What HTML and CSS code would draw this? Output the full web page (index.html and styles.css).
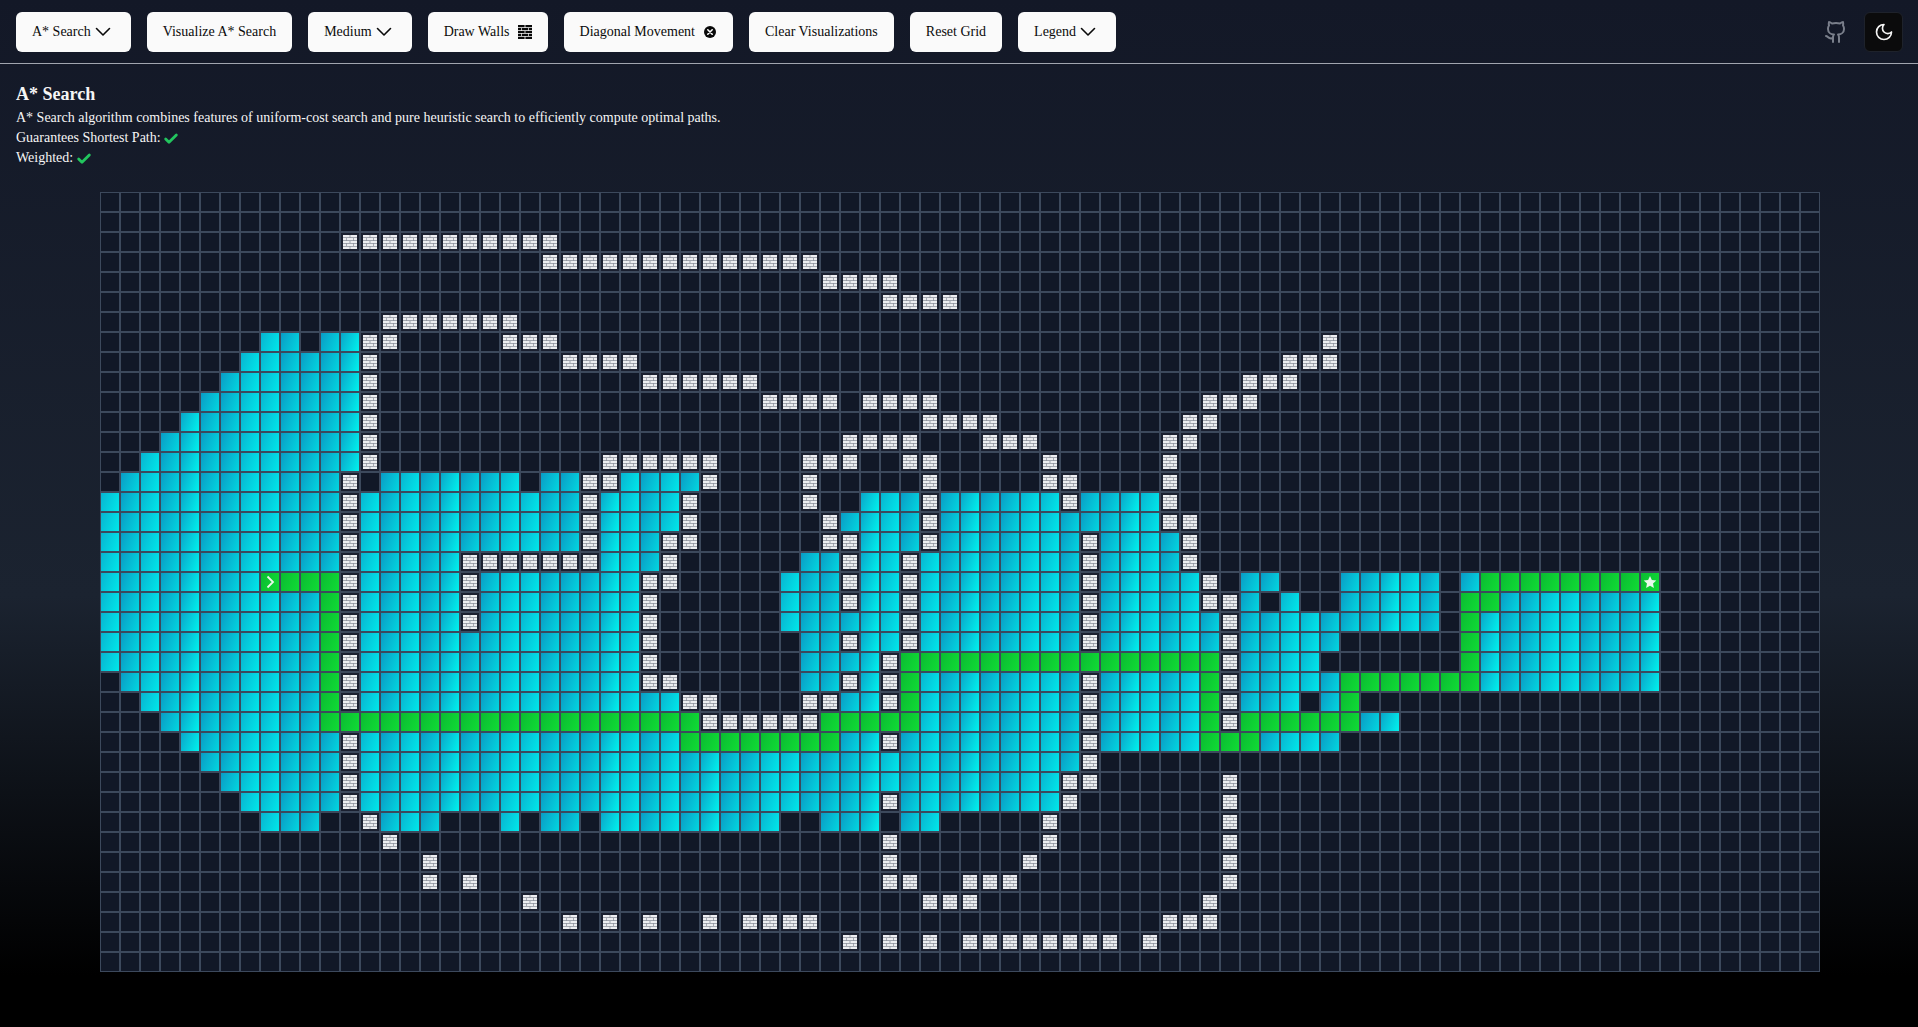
FILE: index.html
```html
<!DOCTYPE html>
<html lang="en">
<head>
  <meta charset="UTF-8">
  <title>Pathfinding Visualizer</title>
  <link rel="stylesheet" href="styles.css">
</head>
<body>
  <svg class="sprite" xmlns="http://www.w3.org/2000/svg">
    <symbol id="brick" viewBox="0 0 14 14">
      <path fill="currentColor" d="M0 0h6.6v2.24H0zM7.4 0H14v2.24H7.4zM0 2.94h3.1v2.24H0zM3.8 2.94h6.4v2.24H3.8zM10.9 2.94H14v2.24h-3.1zM0 5.88h6.6v2.24H0zM7.4 5.88H14v2.24H7.4zM0 8.82h3.1v2.24H0zM3.8 8.82h6.4v2.24H3.8zM10.9 8.82H14v2.24h-3.1zM0 11.76h6.6V14H0zM7.4 11.76H14V14H7.4z"/>
    </symbol>
    <symbol id="chevron" viewBox="0 0 24 24">
      <path d="m5.5 8.5 6.5 6.5 6.5-6.5" fill="none" stroke="currentColor" stroke-width="1.6" stroke-linecap="round" stroke-linejoin="round"/>
    </symbol>
    <symbol id="check" viewBox="0 0 24 24">
      <path d="M20 6 9 17l-5-5" fill="none" stroke="currentColor" stroke-width="4.2" stroke-linecap="round" stroke-linejoin="round"/>
    </symbol>
  </svg>

  <nav class="topbar">
    <div class="controls">
      <button class="btn">A* Search<svg class="icon-24"><use href="#chevron"/></svg></button>
      <button class="btn">Visualize A* Search</button>
      <button class="btn">Medium<svg class="icon-24"><use href="#chevron"/></svg></button>
      <button class="btn">Draw Walls<svg class="icon-14"><use href="#brick"/></svg></button>
      <button class="btn">Diagonal Movement
        <svg class="icon-14" viewBox="0 0 14 14">
          <circle cx="7" cy="7" r="6" fill="#0a0a0a"/>
          <path d="M4.8 4.8l4.4 4.4M9.2 4.8l-4.4 4.4" stroke="#fff" stroke-width="1.6" stroke-linecap="round"/>
        </svg>
      </button>
      <button class="btn">Clear Visualizations</button>
      <button class="btn">Reset Grid</button>
      <button class="btn">Legend<svg class="icon-24"><use href="#chevron"/></svg></button>
    </div>
    <div class="actions">
      <a class="github" href="#">
        <svg width="24" height="24" viewBox="0 0 24 24" fill="none" stroke="currentColor" stroke-width="2" stroke-linecap="round" stroke-linejoin="round">
          <path d="M15 22v-4a4.8 4.8 0 0 0-1-3.5c3 0 6-2 6-5.5.08-1.25-.27-2.48-1-3.5.28-1.15.28-2.35 0-3.5 0 0-1 0-3 1.5-2.64-.5-5.36-.5-8 0C6 2 5 2 5 2c-.3 1.15-.3 2.35 0 3.5A5.403 5.403 0 0 0 4 9c0 3.5 3 5.5 6 5.5-.39.49-.68 1.05-.85 1.65-.17.6-.22 1.23-.15 1.85v4"/>
          <path d="M9 18c-4.51 2-5-2-7-2"/>
        </svg>
      </a>
      <button class="theme-btn">
        <svg width="20" height="20" viewBox="0 0 24 24" fill="none" stroke="currentColor" stroke-width="2" stroke-linecap="round" stroke-linejoin="round">
          <path d="M12 3a6 6 0 0 0 9 9 9 9 0 1 1-9-9Z"/>
        </svg>
      </button>
    </div>
  </nav>

  <section class="info">
    <h2>A* Search</h2>
    <p>A* Search algorithm combines features of uniform-cost search and pure heuristic search to efficiently compute optimal paths.</p>
    <p>Guarantees Shortest Path: <svg class="tick"><use href="#check"/></svg></p>
    <p>Weighted: <svg class="tick"><use href="#check"/></svg></p>
  </section>

  <div class="grid" id="grid"></div>

  <script src="script.js"></script>
</body>
</html>
```

FILE: styles.css
```css
* {
  box-sizing: border-box;
}
html, body {
  height: 100%;
}
body {
  margin: 0;
  overflow: hidden;
  font-family: "Liberation Serif", serif;
  font-size: 14px;
  line-height: 20px;
  color: #f5f5f5;
  background: linear-gradient(180deg, #131827 0%, #1b2330 58%, #000 95%);
}
.sprite {
  display: none;
}
.topbar {
  display: flex;
  justify-content: space-between;
  align-items: center;
  height: 64px;
  padding: 0 15px 0 16px;
  border-bottom: 1px solid #a1a5af;
}
.controls {
  display: flex;
  gap: 16px;
}
.btn {
  display: inline-flex;
  align-items: center;
  height: 40px;
  padding: 0 16px;
  border: none;
  border-radius: 6px;
  background: #fafafa;
  color: #0a0a0a;
  font: inherit;
  white-space: nowrap;
}
.icon-24 {
  width: 24px;
  height: 24px;
}
.icon-14 {
  width: 14px;
  height: 14px;
  margin-left: 8px;
}
.actions {
  display: flex;
  align-items: center;
  gap: 16px;
}
.github {
  display: flex;
  color: #7a7f8b;
}
.theme-btn {
  display: flex;
  align-items: center;
  justify-content: center;
  width: 39px;
  height: 40px;
  padding: 0;
  border: 1px solid #1e222b;
  border-radius: 6px;
  background: #0b0b0c;
  color: #f5f5f5;
}
.info {
  padding: 16px 16px 0;
}
.info h2 {
  margin: 0;
  font-size: 18px;
  line-height: 28px;
  font-weight: bold;
}
.info p {
  margin: 0;
}
.tick {
  width: 16px;
  height: 16px;
  margin-left: -1px;
  vertical-align: -5px;
  color: #22c55e;
}
.grid {
  display: grid;
  grid-template-columns: repeat(86, 20px);
  grid-auto-rows: 20px;
  width: 1720px;
  margin: 24px 0 0 100px;
}
.cell {
  display: flex;
  align-items: center;
  justify-content: center;
  border: 1px solid #3c495c;
  background: #111827;
}
.cyan-a {
  background: linear-gradient(110deg, #0a9cc5, #02d6e0);
}
.cyan-b {
  background: linear-gradient(110deg, #08b4d1, #00e8ea);
}
.cyan-c {
  background: linear-gradient(110deg, #0aa6c9, #00f2ee);
}
.path {
  background: linear-gradient(110deg, #0bbb32, #10dc35);
}
.wall {
  background: #1a2030;
}
.wall svg {
  width: 14px;
  height: 14px;
  background: #8a8f9a;
  color: #eceef1;
}
.marker {
  color: #e9f9ec;
}
```

FILE: script.js
```js
// one entry per row: c = visited, g = path, w = wall, s = start, t = target
const ROWS = {
  2: "w12-22",
  3: "w22-35",
  4: "w36-39",
  5: "w39-42",
  6: "w14-20",
  7: "c8-9 c11-12 w13-14 w20-22 w61",
  8: "c7-12 w13 w23-26 w59-61",
  9: "c6-12 w13 w27-32 w57-59",
  10: "c5-12 w13 w33-36 w38-41 w55-57",
  11: "c4-12 w13 w41-44 w54-55",
  12: "c3-12 w13 w37-40 w44-46 w53-54",
  13: "c2-12 w13 w25-30 w35-37 w40-41 w47 w53",
  14: "c1-11 w12 c14-20 c22-23 w24-25 c26-29 w30 w35 w41 w47-48 w53",
  15: "c0-11 w12 c13-23 w24 c25-28 w29 w35 c38-40 w41 c42-47 w48 c49-52 w53",
  16: "c0-11 w12 c13-23 w24 c25-28 w29 w36 c37-40 w41 c42-52 w53-54",
  17: "c0-11 w12 c13-23 w24 c25-27 w28-29 w36-37 c38-40 w41 c42-48 w49 c50-53 w54",
  18: "c0-11 w12 c13-17 w18-24 c25-27 w28 c35-36 w37 c38-39 w40 c41-48 w49 c50-53 w54",
  19: "c0-7 s8 g9-11 w12 c13-17 w18 c19-26 w27-28 c34-36 w37 c38-39 w40 c41-48 w49 c50-54 w55 c57-58 c62-66 c68 g69-76 t77",
  20: "c0-10 g11 w12 c13-17 w18 c19-26 w27 c34-36 w37 c38-39 w40 c41-48 w49 c50-54 w55-56 c57 c59 c62-66 g68-69 c70-77",
  21: "c0-10 g11 w12 c13-17 w18 c19-26 w27 c34-39 w40 c41-48 w49 c50-55 w56 c57-66 g68 c69-77",
  22: "c0-10 g11 w12 c13-26 w27 c35-36 w37 c38-39 w40 c41-48 w49 c50-55 w56 c57-61 g68 c69-77",
  23: "c0-10 g11 w12 c13-26 w27 c35-38 w39 g40-55 w56 c57-60 g68 c69-77",
  24: "c1-10 g11 w12 c13-26 w27-28 c35-36 w37 c38 w39 g40 c41-48 w49 c50-54 g55 w56 c57-61 g62-68 c69-77",
  25: "c2-10 g11 w12 c13-28 w29-30 w35-36 c37-38 w39 g40 c41-48 w49 c50-54 g55 w56 c57-59 c61 g62",
  26: "c3-10 g11-29 w30-35 g36-40 c41-48 w49 c50-54 g55 w56 g57-62 c63-64",
  27: "c4-11 w12 c13-28 g29-36 c37-38 w39 c40-48 w49 c50-54 g55-57 c58-61",
  28: "c5-11 w12 c13-48 w49",
  29: "c6-11 w12 c13-47 w48-49 w56",
  30: "c7-11 w12 c13-38 w39 c40-47 w48 w56",
  31: "c8-10 w13 c14-16 c20 c22-23 c25-33 c36-38 c40-41 w47 w56",
  32: "w14 w39 w47 w56",
  33: "w16 w39 w46 w56",
  34: "w16 w18 w39-40 w43-45 w56",
  35: "w21 w41-43 w55",
  36: "w23 w25 w27 w30 w32-35 w53-55",
  37: "w37 w39 w41 w43-50 w52"
};

const COLS = 86;
const ROW_COUNT = 39;
const CYAN_PATTERN = ["b", "a", "b", "a", "c", "a", "a", "b", "b", "a", "a", "a", "c"];

const START_ICON = '<svg class="marker" width="14" height="14" viewBox="0 0 14 14"><path d="M4.5 1.5 10 7l-5.5 5.5" fill="none" stroke="currentColor" stroke-width="1.8"/></svg>';
const TARGET_ICON = '<svg class="marker" width="14" height="14" viewBox="0 0 24 24"><path fill="currentColor" d="M12 1.5l3.2 7 7.6.9-5.6 5.2 1.5 7.5L12 18.3l-6.7 3.8 1.5-7.5L1.2 9.4l7.6-.9z"/></svg>';
const WALL_ICON = '<svg><use href="#brick"/></svg>';

function parseRow(spec) {
  const kinds = {};
  if (!spec) return kinds;
  spec.split(" ").forEach(part => {
    const [from, to] = part.slice(1).split("-").map(Number);
    for (let c = from; c <= (to === undefined ? from : to); c++) {
      kinds[c] = part[0];
    }
  });
  return kinds;
}

function buildCell(kind, col) {
  const cell = document.createElement("div");
  cell.className = "cell";
  if (kind === "c") {
    cell.classList.add("cyan-" + CYAN_PATTERN[col % CYAN_PATTERN.length]);
  } else if (kind === "g" || kind === "s" || kind === "t") {
    cell.classList.add("path");
    if (kind === "s") cell.innerHTML = START_ICON;
    if (kind === "t") cell.innerHTML = TARGET_ICON;
  } else if (kind === "w") {
    cell.classList.add("wall");
    cell.innerHTML = WALL_ICON;
  }
  return cell;
}

const grid = document.getElementById("grid");
for (let r = 0; r < ROW_COUNT; r++) {
  const kinds = parseRow(ROWS[r]);
  for (let c = 0; c < COLS; c++) {
    grid.appendChild(buildCell(kinds[c], c));
  }
}
```
